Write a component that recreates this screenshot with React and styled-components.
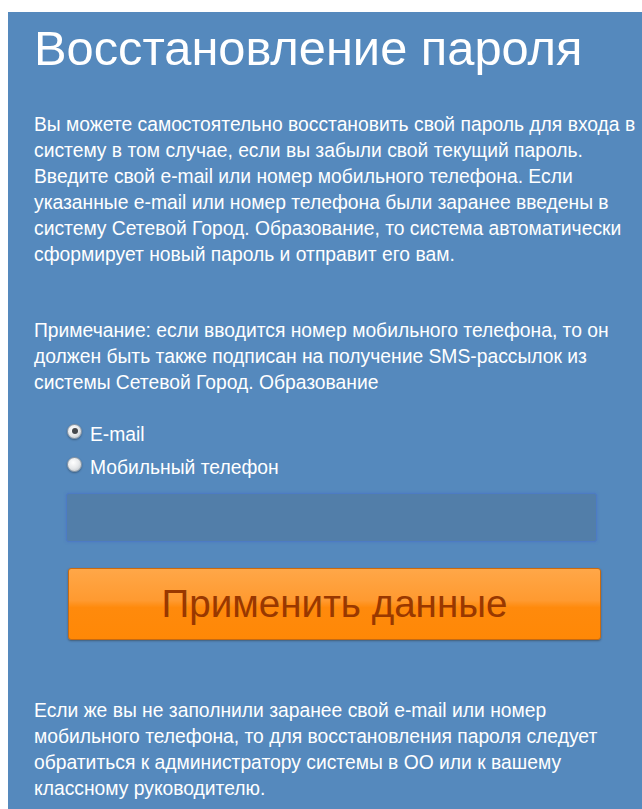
import React, { useState } from "react";
import styled, { createGlobalStyle } from "styled-components";

const GlobalStyle = createGlobalStyle`
  html, body {
    margin: 0;
    padding: 0;
    background: #fff;
  }
  body {
    font-family: "Liberation Sans", Arial, sans-serif;
  }
`;

const Panel = styled.section`
  margin: 12px 0 0 8px;
  min-height: 797px;
  background: #5589bd;
  padding: 0 0 0 26px;
  box-sizing: border-box;
  color: #fff;
  overflow: hidden;
`;

const Title = styled.h1`
  margin: 0;
  padding-top: 8px;
  font-family: "Liberation Sans", Arial, sans-serif;
  font-weight: normal;
  font-size: 48.8px;
  line-height: 56px;
  color: #fff;
  white-space: nowrap;
`;

const Text = styled.p`
  margin: ${(p) => p.$top || 0}px 0 0;
  font-family: "Liberation Sans", Arial, sans-serif;
  font-size: 19.3px;
  line-height: 26px;
  color: #fff;
  white-space: nowrap;
`;

const Choices = styled.div`
  margin: 22px 0 0 33px;
  display: flex;
  flex-direction: column;
`;

const Choice = styled.label`
  display: flex;
  align-items: center;
  gap: 8px;
  height: 33px;
  font-family: "Liberation Sans", Arial, sans-serif;
  font-size: 19.3px;
  color: #fff;
  cursor: pointer;
`;

const Dot = styled.span`
  flex: none;
  width: 15px;
  height: 15px;
  border-radius: 50%;
  margin-top: -7px;
  box-sizing: border-box;
  border: 1px solid #8f99a3;
  background: radial-gradient(circle at 40% 35%, #ffffff 0%, #e6e8ea 50%, #b3b9bf 100%);
  box-shadow: 0 1px 2px rgba(0, 0, 0, 0.3);
  display: flex;
  align-items: center;
  justify-content: center;
  &::after {
    content: "";
    width: 6px;
    height: 6px;
    border-radius: 50%;
    background: ${(p) => (p.$on ? "#45484c" : "transparent")};
  }
`;

const Field = styled.input`
  display: block;
  margin: 9px 0 0 32px;
  width: 531px;
  height: 49px;
  box-sizing: border-box;
  border: 1px solid #4d7bc4;
  border-radius: 3px;
  background: #527ea9;
  box-shadow: 0 0 3px rgba(70, 110, 200, 0.6);
  outline: none;
  color: #fff;
  font-size: 18px;
  padding: 0 10px;
`;

const Submit = styled.button`
  display: block;
  margin: 26px 0 0 34px;
  width: 533px;
  height: 72px;
  border: 1px solid #c86a10;
  border-radius: 3px;
  background: linear-gradient(#ffa748 0%, #ff9a30 45%, #ff8a0c 55%, #ff8806 100%);
  box-shadow: 0 1px 2px rgba(40, 40, 40, 0.45);
  color: #993800;
  font-family: "Liberation Sans", Arial, sans-serif;
  font-size: 38.6px;
  cursor: pointer;
`;

export default function App() {
  const [mode, setMode] = useState("email");

  return (
    <>
      <GlobalStyle />
      <Panel>
        <Title>Восстановление пароля</Title>
        <Text $top={36}>
          Вы можете самостоятельно восстановить свой пароль для входа в
          <br />
          систему в том случае, если вы забыли свой текущий пароль.
          <br />
          Введите свой e-mail или номер мобильного телефона. Если
          <br />
          указанные e-mail или номер телефона были заранее введены в
          <br />
          систему Сетевой Город. Образование, то система автоматически
          <br />
          сформирует новый пароль и отправит его вам.
        </Text>
        <Text $top={50}>
          Примечание: если вводится номер мобильного телефона, то он
          <br />
          должен быть также подписан на получение SMS-рассылок из
          <br />
          системы Сетевой Город. Образование
        </Text>
        <Choices>
          <Choice onClick={() => setMode("email")}>
            <Dot $on={mode === "email"} />
            E-mail
          </Choice>
          <Choice onClick={() => setMode("phone")}>
            <Dot $on={mode === "phone"} />
            Мобильный телефон
          </Choice>
        </Choices>
        <Field type="text" />
        <Submit type="button">Применить данные</Submit>
        <Text $top={58}>
          Если же вы не заполнили заранее свой e-mail или номер
          <br />
          мобильного телефона, то для восстановления пароля следует
          <br />
          обратиться к администратору системы в ОО или к вашему
          <br />
          классному руководителю.
        </Text>
      </Panel>
    </>
  );
}
